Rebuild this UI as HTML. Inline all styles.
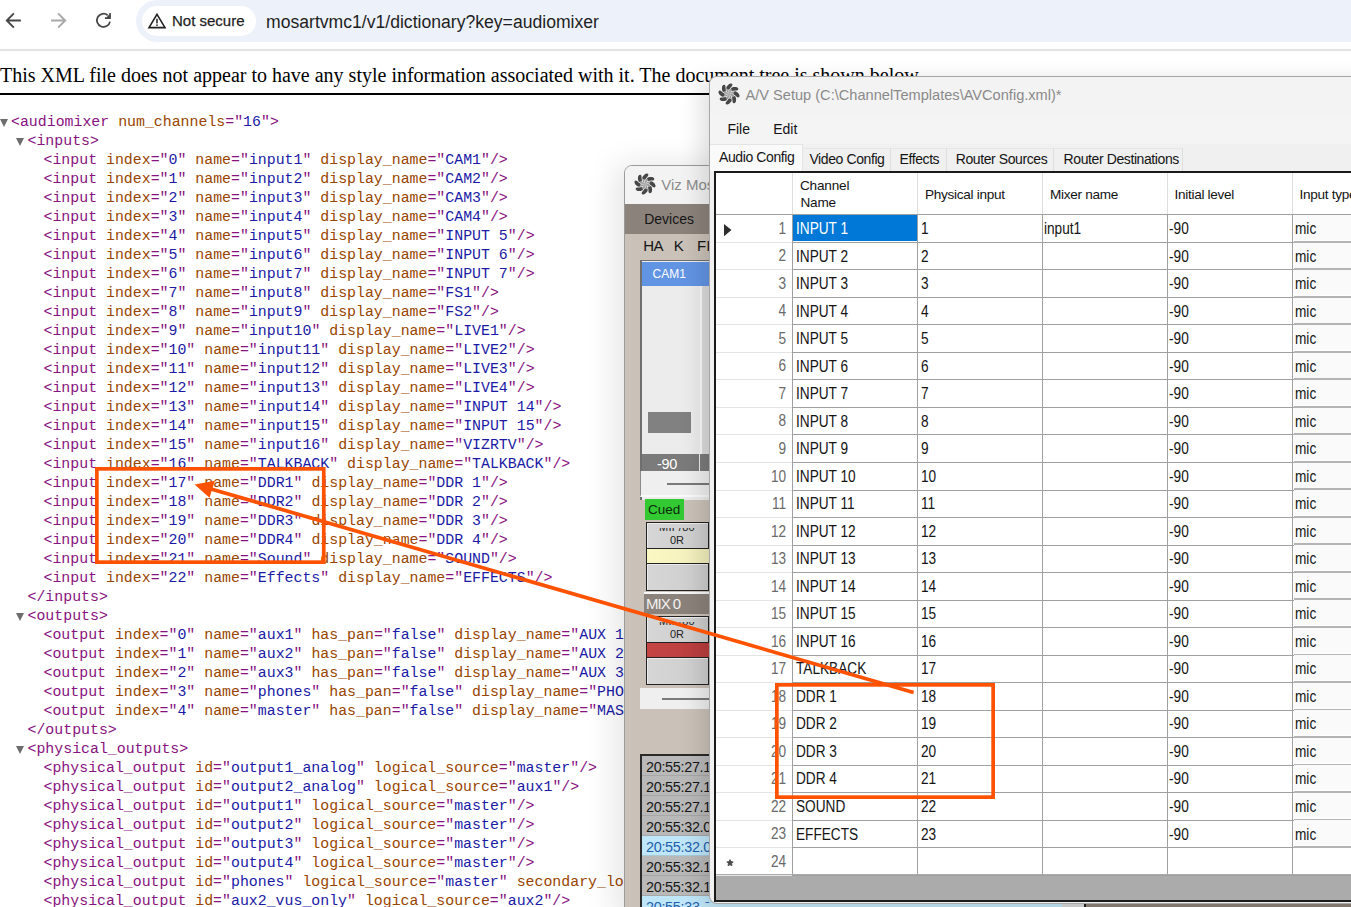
<!DOCTYPE html>
<html><head><meta charset="utf-8">
<style>
*{margin:0;padding:0;box-sizing:border-box}
html,body{width:1351px;height:907px;overflow:hidden;background:#fff;position:relative;font-family:"Liberation Sans",sans-serif}
.abs{position:absolute}
.t{white-space:pre}
/* chrome bar */
#bar{position:absolute;left:0;top:0;width:1351px;height:50.8px;background:#fff;border-bottom:2px solid #e3e3e3}
#omni{position:absolute;left:136px;top:0px;width:1260px;height:42px;background:#edf2fa;border-radius:21px}
#chip{position:absolute;left:142px;top:6px;width:114px;height:30px;background:#fff;border-radius:15px}
#notsec{position:absolute;left:172px;top:12.3px;-webkit-text-stroke:0.25px #1f1f1f;font-size:15px;line-height:18px;color:#1f1f1f;white-space:pre}
#url{position:absolute;left:266px;top:11.3px;font-size:17.6px;line-height:22px;color:#1f1f1f;white-space:pre}
/* xml */
#note{position:absolute;left:0;top:63px;font-family:"Liberation Serif",serif;font-size:20px;line-height:24px;color:#000;white-space:pre}
#rule{position:absolute;left:0;top:93px;width:1351px;height:2px;background:#000}
#xml{position:absolute;left:0;top:0;font-family:"Liberation Mono",monospace;font-size:14.88px;color:#881280}
#xml div{position:absolute;white-space:pre;line-height:19px;height:19px}
.n{color:#994500}.v{color:#1a1aa6}
.tri{position:absolute;width:0;height:0;border-left:4.5px solid transparent;border-right:4.5px solid transparent;border-top:8px solid #6e6e6e}
</style></head><body>
<div id="bar">
  <svg class="abs" style="left:0;top:0" width="130" height="45" viewBox="0 0 130 45">
    <g fill="none" stroke-width="1.9" stroke-linecap="butt" stroke-linejoin="miter">
      <path d="M20.9 20.5H7.6M13.9 13.4L6.8 20.5L13.9 27.6" stroke="#474747"/>
      <path d="M51.1 20.5H64.4M58.1 13.4L65.2 20.5L58.1 27.6" stroke="#a8a8a8"/>
    </g>
    <path d="M110 21.6A6.6 6.6 0 1 1 107.7 15.2" fill="none" stroke="#474747" stroke-width="1.8"/>
    <path d="M109.2 13H110.9V18.9H104.9V17.3H109.2Z M106.6 17.3L109.2 14.6V17.3Z" fill="#474747"/>
  </svg>
  <div id="omni"></div>
  <div id="chip"></div>
  <svg class="abs" style="left:147px;top:12px" width="20" height="17" viewBox="0 0 20 17">
    <path d="M10 2.3L18 15.6H2Z" fill="none" stroke="#1f1f1f" stroke-width="1.6" stroke-linejoin="miter"/>
    <rect x="9.25" y="6.8" width="1.5" height="4.6" fill="#1f1f1f"/><rect x="9.25" y="12.4" width="1.5" height="1.5" fill="#1f1f1f"/>
  </svg>
  <div id="notsec">Not secure</div>
  <div id="url">mosartvmc1/v1/dictionary?key=audiomixer</div>
</div>
<div id="note">This XML file does not appear to have any style information associated with it. The document tree is shown below.</div>
<div id="rule"></div>
<div id="xml">
<div style="left:11.0px;top:112.5px">&lt;audiomixer <span class="n">num_channels</span>="<span class="v">16</span>"&gt;</div>
<i class="tri" style="left:-0.5px;top:119.0px"></i>
<div style="left:27.5px;top:131.5px">&lt;inputs&gt;</div>
<i class="tri" style="left:16.0px;top:138.0px"></i>
<div style="left:43.5px;top:150.5px">&lt;input <span class="n">index</span>="<span class="v">0</span>" <span class="n">name</span>="<span class="v">input1</span>" <span class="n">display_name</span>="<span class="v">CAM1</span>"/&gt;</div>
<div style="left:43.5px;top:169.5px">&lt;input <span class="n">index</span>="<span class="v">1</span>" <span class="n">name</span>="<span class="v">input2</span>" <span class="n">display_name</span>="<span class="v">CAM2</span>"/&gt;</div>
<div style="left:43.5px;top:188.5px">&lt;input <span class="n">index</span>="<span class="v">2</span>" <span class="n">name</span>="<span class="v">input3</span>" <span class="n">display_name</span>="<span class="v">CAM3</span>"/&gt;</div>
<div style="left:43.5px;top:207.5px">&lt;input <span class="n">index</span>="<span class="v">3</span>" <span class="n">name</span>="<span class="v">input4</span>" <span class="n">display_name</span>="<span class="v">CAM4</span>"/&gt;</div>
<div style="left:43.5px;top:226.5px">&lt;input <span class="n">index</span>="<span class="v">4</span>" <span class="n">name</span>="<span class="v">input5</span>" <span class="n">display_name</span>="<span class="v">INPUT 5</span>"/&gt;</div>
<div style="left:43.5px;top:245.5px">&lt;input <span class="n">index</span>="<span class="v">5</span>" <span class="n">name</span>="<span class="v">input6</span>" <span class="n">display_name</span>="<span class="v">INPUT 6</span>"/&gt;</div>
<div style="left:43.5px;top:264.5px">&lt;input <span class="n">index</span>="<span class="v">6</span>" <span class="n">name</span>="<span class="v">input7</span>" <span class="n">display_name</span>="<span class="v">INPUT 7</span>"/&gt;</div>
<div style="left:43.5px;top:283.5px">&lt;input <span class="n">index</span>="<span class="v">7</span>" <span class="n">name</span>="<span class="v">input8</span>" <span class="n">display_name</span>="<span class="v">FS1</span>"/&gt;</div>
<div style="left:43.5px;top:302.5px">&lt;input <span class="n">index</span>="<span class="v">8</span>" <span class="n">name</span>="<span class="v">input9</span>" <span class="n">display_name</span>="<span class="v">FS2</span>"/&gt;</div>
<div style="left:43.5px;top:321.5px">&lt;input <span class="n">index</span>="<span class="v">9</span>" <span class="n">name</span>="<span class="v">input10</span>" <span class="n">display_name</span>="<span class="v">LIVE1</span>"/&gt;</div>
<div style="left:43.5px;top:340.5px">&lt;input <span class="n">index</span>="<span class="v">10</span>" <span class="n">name</span>="<span class="v">input11</span>" <span class="n">display_name</span>="<span class="v">LIVE2</span>"/&gt;</div>
<div style="left:43.5px;top:359.5px">&lt;input <span class="n">index</span>="<span class="v">11</span>" <span class="n">name</span>="<span class="v">input12</span>" <span class="n">display_name</span>="<span class="v">LIVE3</span>"/&gt;</div>
<div style="left:43.5px;top:378.5px">&lt;input <span class="n">index</span>="<span class="v">12</span>" <span class="n">name</span>="<span class="v">input13</span>" <span class="n">display_name</span>="<span class="v">LIVE4</span>"/&gt;</div>
<div style="left:43.5px;top:397.5px">&lt;input <span class="n">index</span>="<span class="v">13</span>" <span class="n">name</span>="<span class="v">input14</span>" <span class="n">display_name</span>="<span class="v">INPUT 14</span>"/&gt;</div>
<div style="left:43.5px;top:416.5px">&lt;input <span class="n">index</span>="<span class="v">14</span>" <span class="n">name</span>="<span class="v">input15</span>" <span class="n">display_name</span>="<span class="v">INPUT 15</span>"/&gt;</div>
<div style="left:43.5px;top:435.5px">&lt;input <span class="n">index</span>="<span class="v">15</span>" <span class="n">name</span>="<span class="v">input16</span>" <span class="n">display_name</span>="<span class="v">VIZRTV</span>"/&gt;</div>
<div style="left:43.5px;top:454.5px">&lt;input <span class="n">index</span>="<span class="v">16</span>" <span class="n">name</span>="<span class="v">TALKBACK</span>" <span class="n">display_name</span>="<span class="v">TALKBACK</span>"/&gt;</div>
<div style="left:43.5px;top:473.5px">&lt;input <span class="n">index</span>="<span class="v">17</span>" <span class="n">name</span>="<span class="v">DDR1</span>" <span class="n">display_name</span>="<span class="v">DDR 1</span>"/&gt;</div>
<div style="left:43.5px;top:492.5px">&lt;input <span class="n">index</span>="<span class="v">18</span>" <span class="n">name</span>="<span class="v">DDR2</span>" <span class="n">display_name</span>="<span class="v">DDR 2</span>"/&gt;</div>
<div style="left:43.5px;top:511.5px">&lt;input <span class="n">index</span>="<span class="v">19</span>" <span class="n">name</span>="<span class="v">DDR3</span>" <span class="n">display_name</span>="<span class="v">DDR 3</span>"/&gt;</div>
<div style="left:43.5px;top:530.5px">&lt;input <span class="n">index</span>="<span class="v">20</span>" <span class="n">name</span>="<span class="v">DDR4</span>" <span class="n">display_name</span>="<span class="v">DDR 4</span>"/&gt;</div>
<div style="left:43.5px;top:549.5px">&lt;input <span class="n">index</span>="<span class="v">21</span>" <span class="n">name</span>="<span class="v">Sound</span>" <span class="n">display_name</span>="<span class="v">SOUND</span>"/&gt;</div>
<div style="left:43.5px;top:568.5px">&lt;input <span class="n">index</span>="<span class="v">22</span>" <span class="n">name</span>="<span class="v">Effects</span>" <span class="n">display_name</span>="<span class="v">EFFECTS</span>"/&gt;</div>
<div style="left:27.5px;top:587.5px">&lt;/inputs&gt;</div>
<div style="left:27.5px;top:606.5px">&lt;outputs&gt;</div>
<i class="tri" style="left:16.0px;top:613.0px"></i>
<div style="left:43.5px;top:625.5px">&lt;output <span class="n">index</span>="<span class="v">0</span>" <span class="n">name</span>="<span class="v">aux1</span>" <span class="n">has_pan</span>="<span class="v">false</span>" <span class="n">display_name</span>="<span class="v">AUX 1</span>"/&gt;</div>
<div style="left:43.5px;top:644.5px">&lt;output <span class="n">index</span>="<span class="v">1</span>" <span class="n">name</span>="<span class="v">aux2</span>" <span class="n">has_pan</span>="<span class="v">false</span>" <span class="n">display_name</span>="<span class="v">AUX 2</span>"/&gt;</div>
<div style="left:43.5px;top:663.5px">&lt;output <span class="n">index</span>="<span class="v">2</span>" <span class="n">name</span>="<span class="v">aux3</span>" <span class="n">has_pan</span>="<span class="v">false</span>" <span class="n">display_name</span>="<span class="v">AUX 3</span>"/&gt;</div>
<div style="left:43.5px;top:682.5px">&lt;output <span class="n">index</span>="<span class="v">3</span>" <span class="n">name</span>="<span class="v">phones</span>" <span class="n">has_pan</span>="<span class="v">false</span>" <span class="n">display_name</span>="<span class="v">PHONES</span>"/&gt;</div>
<div style="left:43.5px;top:701.5px">&lt;output <span class="n">index</span>="<span class="v">4</span>" <span class="n">name</span>="<span class="v">master</span>" <span class="n">has_pan</span>="<span class="v">false</span>" <span class="n">display_name</span>="<span class="v">MASTER</span>"/&gt;</div>
<div style="left:27.5px;top:720.5px">&lt;/outputs&gt;</div>
<div style="left:27.5px;top:739.5px">&lt;physical_outputs&gt;</div>
<i class="tri" style="left:16.0px;top:746.0px"></i>
<div style="left:43.5px;top:758.5px">&lt;physical_output <span class="n">id</span>="<span class="v">output1_analog</span>" <span class="n">logical_source</span>="<span class="v">master</span>"/&gt;</div>
<div style="left:43.5px;top:777.5px">&lt;physical_output <span class="n">id</span>="<span class="v">output2_analog</span>" <span class="n">logical_source</span>="<span class="v">aux1</span>"/&gt;</div>
<div style="left:43.5px;top:796.5px">&lt;physical_output <span class="n">id</span>="<span class="v">output1</span>" <span class="n">logical_source</span>="<span class="v">master</span>"/&gt;</div>
<div style="left:43.5px;top:815.5px">&lt;physical_output <span class="n">id</span>="<span class="v">output2</span>" <span class="n">logical_source</span>="<span class="v">master</span>"/&gt;</div>
<div style="left:43.5px;top:834.5px">&lt;physical_output <span class="n">id</span>="<span class="v">output3</span>" <span class="n">logical_source</span>="<span class="v">master</span>"/&gt;</div>
<div style="left:43.5px;top:853.5px">&lt;physical_output <span class="n">id</span>="<span class="v">output4</span>" <span class="n">logical_source</span>="<span class="v">master</span>"/&gt;</div>
<div style="left:43.5px;top:872.5px">&lt;physical_output <span class="n">id</span>="<span class="v">phones</span>" <span class="n">logical_source</span>="<span class="v">master</span>" <span class="n">secondary_logical_source</span>="<span class="v">aux1</span>"/&gt;</div>
<div style="left:43.5px;top:891.5px">&lt;physical_output <span class="n">id</span>="<span class="v">aux2_vus_only</span>" <span class="n">logical_source</span>="<span class="v">aux2</span>"/&gt;</div>
</div>
<div id="viz" class="abs" style="left:624px;top:165px;width:200px;height:760px;background:#f3f3f3;border:1px solid #9a9a9a;border-radius:8px 8px 0 0;overflow:hidden;box-shadow:-8px 0 32px rgba(0,0,0,0.11)">
<div class="abs" style="left:0px;top:0px;width:200px;height:38px;background:#f3f3f3"></div>
<svg class="abs" style="left:7px;top:5px" width="26" height="26" viewBox="-13 -13 26 26"><circle r="1.6" fill="#b0b0b0"/><path d="M0.1,-1.0 L0.5,-1.3 L0.8,-1.6 L1.0,-1.9 L1.3,-2.1 L1.6,-2.4 L1.9,-2.6 L2.2,-2.8 L2.6,-3.0 L2.9,-3.2 L3.3,-3.3 L3.6,-3.5 L4.0,-3.6 L3.3,-6.2 L2.8,-6.0 L2.2,-5.7 L1.7,-5.3 L1.3,-4.9 L0.9,-4.5 L0.6,-4.1 L0.3,-3.6 L0.1,-3.1 L-0.1,-2.6 L-0.1,-2.0 L-0.1,-1.5 L0.1,-1.0ZM0.8,-0.7 L1.2,-0.6 L1.7,-0.6 L2.1,-0.6 L2.5,-0.6 L2.8,-0.5 L3.2,-0.5 L3.6,-0.4 L3.9,-0.3 L4.3,-0.2 L4.6,-0.0 L5.0,0.1 L5.4,0.3 L6.8,-2.0 L6.2,-2.2 L5.6,-2.4 L5.0,-2.5 L4.4,-2.6 L3.8,-2.5 L3.3,-2.5 L2.7,-2.3 L2.2,-2.1 L1.8,-1.9 L1.3,-1.5 L1.0,-1.2 L0.8,-0.7ZM1.0,0.1 L1.3,0.5 L1.6,0.8 L1.9,1.0 L2.1,1.3 L2.4,1.6 L2.6,1.9 L2.8,2.2 L3.0,2.6 L3.2,2.9 L3.3,3.3 L3.5,3.6 L3.6,4.0 L6.2,3.3 L6.0,2.8 L5.7,2.2 L5.3,1.7 L4.9,1.3 L4.5,0.9 L4.1,0.6 L3.6,0.3 L3.1,0.1 L2.6,-0.1 L2.0,-0.1 L1.5,-0.1 L1.0,0.1ZM0.7,0.8 L0.6,1.2 L0.6,1.7 L0.6,2.1 L0.6,2.5 L0.5,2.8 L0.5,3.2 L0.4,3.6 L0.3,3.9 L0.2,4.3 L0.0,4.6 L-0.1,5.0 L-0.3,5.4 L2.0,6.8 L2.2,6.2 L2.4,5.6 L2.5,5.0 L2.6,4.4 L2.5,3.8 L2.5,3.3 L2.3,2.7 L2.1,2.2 L1.9,1.8 L1.5,1.3 L1.2,1.0 L0.7,0.8ZM-0.1,1.0 L-0.5,1.3 L-0.8,1.6 L-1.0,1.9 L-1.3,2.1 L-1.6,2.4 L-1.9,2.6 L-2.2,2.8 L-2.6,3.0 L-2.9,3.2 L-3.3,3.3 L-3.6,3.5 L-4.0,3.6 L-3.3,6.2 L-2.8,6.0 L-2.2,5.7 L-1.7,5.3 L-1.3,4.9 L-0.9,4.5 L-0.6,4.1 L-0.3,3.6 L-0.1,3.1 L0.1,2.6 L0.1,2.0 L0.1,1.5 L-0.1,1.0ZM-0.8,0.7 L-1.2,0.6 L-1.7,0.6 L-2.1,0.6 L-2.5,0.6 L-2.8,0.5 L-3.2,0.5 L-3.6,0.4 L-3.9,0.3 L-4.3,0.2 L-4.6,0.0 L-5.0,-0.1 L-5.4,-0.3 L-6.8,2.0 L-6.2,2.2 L-5.6,2.4 L-5.0,2.5 L-4.4,2.6 L-3.8,2.5 L-3.3,2.5 L-2.7,2.3 L-2.2,2.1 L-1.8,1.9 L-1.3,1.5 L-1.0,1.2 L-0.8,0.7ZM-1.0,-0.1 L-1.3,-0.5 L-1.6,-0.8 L-1.9,-1.0 L-2.1,-1.3 L-2.4,-1.6 L-2.6,-1.9 L-2.8,-2.2 L-3.0,-2.6 L-3.2,-2.9 L-3.3,-3.3 L-3.5,-3.6 L-3.6,-4.0 L-6.2,-3.3 L-6.0,-2.8 L-5.7,-2.2 L-5.3,-1.7 L-4.9,-1.3 L-4.5,-0.9 L-4.1,-0.6 L-3.6,-0.3 L-3.1,-0.1 L-2.6,0.1 L-2.0,0.1 L-1.5,0.1 L-1.0,-0.1ZM-0.7,-0.8 L-0.6,-1.2 L-0.6,-1.7 L-0.6,-2.1 L-0.6,-2.5 L-0.5,-2.8 L-0.5,-3.2 L-0.4,-3.6 L-0.3,-3.9 L-0.2,-4.3 L-0.0,-4.6 L0.1,-5.0 L0.3,-5.4 L-2.0,-6.8 L-2.2,-6.2 L-2.4,-5.6 L-2.5,-5.0 L-2.6,-4.4 L-2.5,-3.8 L-2.5,-3.3 L-2.3,-2.7 L-2.1,-2.2 L-1.9,-1.8 L-1.5,-1.3 L-1.2,-1.0 L-0.7,-0.8Z" fill="#9c9c9c"/><path d="M3.4,-2.9 L3.7,-3.0 L4.1,-3.1 L4.4,-3.2 L4.8,-3.3 L5.2,-3.3 L5.6,-3.4 L6.1,-3.4 L6.5,-3.5 L7.0,-3.5 L7.6,-3.5 L8.2,-3.6 L9.3,-4.5 L9.3,-4.5 L9.1,-5.9 L8.5,-6.3 L7.9,-6.7 L7.2,-6.9 L6.5,-7.0 L5.8,-7.1 L5.1,-7.1 L4.4,-7.0 L3.8,-6.8 L3.1,-6.6 L2.5,-6.3 L2.0,-6.0ZM4.4,0.3 L4.8,0.5 L5.1,0.7 L5.4,0.9 L5.7,1.1 L6.0,1.3 L6.4,1.6 L6.7,1.9 L7.1,2.2 L7.4,2.5 L7.9,2.9 L8.4,3.2 L9.7,3.4 L9.7,3.4 L10.6,2.3 L10.5,1.6 L10.3,0.9 L10.0,0.2 L9.6,-0.4 L9.1,-0.9 L8.6,-1.4 L8.0,-1.8 L7.5,-2.2 L6.9,-2.5 L6.3,-2.7 L5.6,-2.8ZM2.9,3.4 L3.0,3.7 L3.1,4.1 L3.2,4.4 L3.3,4.8 L3.3,5.2 L3.4,5.6 L3.4,6.1 L3.5,6.5 L3.5,7.0 L3.5,7.6 L3.6,8.2 L4.5,9.3 L4.5,9.3 L5.9,9.1 L6.3,8.5 L6.7,7.9 L6.9,7.2 L7.0,6.5 L7.1,5.8 L7.1,5.1 L7.0,4.4 L6.8,3.8 L6.6,3.1 L6.3,2.5 L6.0,2.0ZM-0.3,4.4 L-0.5,4.8 L-0.7,5.1 L-0.9,5.4 L-1.1,5.7 L-1.3,6.0 L-1.6,6.4 L-1.9,6.7 L-2.2,7.1 L-2.5,7.4 L-2.9,7.9 L-3.2,8.4 L-3.4,9.7 L-3.4,9.7 L-2.3,10.6 L-1.6,10.5 L-0.9,10.3 L-0.2,10.0 L0.4,9.6 L0.9,9.1 L1.4,8.6 L1.8,8.0 L2.2,7.5 L2.5,6.9 L2.7,6.3 L2.8,5.6ZM-3.4,2.9 L-3.7,3.0 L-4.1,3.1 L-4.4,3.2 L-4.8,3.3 L-5.2,3.3 L-5.6,3.4 L-6.1,3.4 L-6.5,3.5 L-7.0,3.5 L-7.6,3.5 L-8.2,3.6 L-9.3,4.5 L-9.3,4.5 L-9.1,5.9 L-8.5,6.3 L-7.9,6.7 L-7.2,6.9 L-6.5,7.0 L-5.8,7.1 L-5.1,7.1 L-4.4,7.0 L-3.8,6.8 L-3.1,6.6 L-2.5,6.3 L-2.0,6.0ZM-4.4,-0.3 L-4.8,-0.5 L-5.1,-0.7 L-5.4,-0.9 L-5.7,-1.1 L-6.0,-1.3 L-6.4,-1.6 L-6.7,-1.9 L-7.1,-2.2 L-7.4,-2.5 L-7.9,-2.9 L-8.4,-3.2 L-9.7,-3.4 L-9.7,-3.4 L-10.6,-2.3 L-10.5,-1.6 L-10.3,-0.9 L-10.0,-0.2 L-9.6,0.4 L-9.1,0.9 L-8.6,1.4 L-8.0,1.8 L-7.5,2.2 L-6.9,2.5 L-6.3,2.7 L-5.6,2.8ZM-2.9,-3.4 L-3.0,-3.7 L-3.1,-4.1 L-3.2,-4.4 L-3.3,-4.8 L-3.3,-5.2 L-3.4,-5.6 L-3.4,-6.1 L-3.5,-6.5 L-3.5,-7.0 L-3.5,-7.6 L-3.6,-8.2 L-4.5,-9.3 L-4.5,-9.3 L-5.9,-9.1 L-6.3,-8.5 L-6.7,-7.9 L-6.9,-7.2 L-7.0,-6.5 L-7.1,-5.8 L-7.1,-5.1 L-7.0,-4.4 L-6.8,-3.8 L-6.6,-3.1 L-6.3,-2.5 L-6.0,-2.0ZM0.3,-4.4 L0.5,-4.8 L0.7,-5.1 L0.9,-5.4 L1.1,-5.7 L1.3,-6.0 L1.6,-6.4 L1.9,-6.7 L2.2,-7.1 L2.5,-7.4 L2.9,-7.9 L3.2,-8.4 L3.4,-9.7 L3.4,-9.7 L2.3,-10.6 L1.6,-10.5 L0.9,-10.3 L0.2,-10.0 L-0.4,-9.6 L-0.9,-9.1 L-1.4,-8.6 L-1.8,-8.0 L-2.2,-7.5 L-2.5,-6.9 L-2.7,-6.3 L-2.8,-5.6Z" fill="#474747"/></svg>
<div class="abs t" style="left:36.299999999999955px;top:10.12px;font-size:15px;line-height:17.25px;color:#8c8c8c;">Viz Mosart</div>
<div class="abs" style="left:0px;top:37.5px;width:200px;height:30.3px;background:#8b827b"></div>
<div class="abs t" style="left:19.200000000000045px;top:45.23px;font-size:14px;line-height:16.10px;color:#161616;">Devices</div>
<div class="abs" style="left:0px;top:67.80000000000001px;width:200px;height:700px;background:#cac2b8"></div>
<div class="abs t" style="left:18.200000000000045px;top:70.53px;font-size:15px;line-height:17.25px;color:#151515;letter-spacing:-0.6px">HA</div>
<div class="abs t" style="left:48.700000000000045px;top:70.53px;font-size:15px;line-height:17.25px;color:#151515;">K</div>
<div class="abs t" style="left:72px;top:70.53px;font-size:15px;line-height:17.25px;color:#151515;">FI</div>
<div class="abs" style="left:15.399999999999977px;top:94px;width:80px;height:240px;background:#ececec;border-left:2px solid #6f6f6f;border-top:1.6px solid #6f6f6f"></div>
<div class="abs" style="left:17.399999999999977px;top:95.60000000000002px;width:80px;height:24.8px;background:#6294e4"></div>
<div class="abs t" style="left:27.5px;top:102.34px;font-size:12px;line-height:13.80px;color:#ffffff;">CAM1</div>
<div class="abs" style="left:75px;top:120.39999999999998px;width:1.5px;height:168px;background:#fafafa"></div>
<div class="abs" style="left:76.5px;top:120.39999999999998px;width:20px;height:168px;background:#dcdcdc"></div>
<div class="abs" style="left:22.600000000000023px;top:245.5px;width:43.5px;height:21px;background:#818181"></div>
<div class="abs" style="left:17.399999999999977px;top:288px;width:56.4px;height:17px;background:#7b7b7b"></div>
<div class="abs" style="left:75px;top:288px;width:20px;height:17px;background:#7b7b7b"></div>
<div class="abs t" style="left:32px;top:289.68px;font-size:14.5px;line-height:16.67px;color:#ffffff;letter-spacing:-0.3px">-90</div>
<div class="abs" style="left:15.399999999999977px;top:305px;width:80px;height:25.5px;background:#efefef;border-left:1.6px solid #8a8a8a;border-bottom:2px solid #fafafa"></div>
<div class="abs" style="left:42.39999999999998px;top:317.3px;width:60px;height:2.2px;background:#7a7a7a"></div>
<div class="abs" style="left:20.100000000000023px;top:333.2px;width:38.6px;height:21px;background:#33c933"></div>
<div class="abs t" style="left:23px;top:336.48px;font-size:13.5px;line-height:15.52px;color:#0c2a0c;">Cued</div>
<div class="abs" style="left:21px;top:355.79999999999995px;width:62.7px;height:27.600000000000023px;background:linear-gradient(90deg,#d6d6d6,#cdcdcd);border:1.7px solid #222;box-shadow:inset 1px 1px 0 #ececec"></div>
<div class="abs" style="left:21px;top:361.60px;width:62px;height:20.10px;overflow:hidden">
<div class="abs t" style="left:0;top:-5.20px;width:62px;text-align:center;font-size:11px;line-height:11px;color:#222;letter-spacing:0.3px">MIF/80</div>
<div class="abs t" style="left:0;top:7.40px;width:62px;text-align:center;font-size:11px;line-height:11px;color:#222">0R</div>
</div>
<div class="abs" style="left:21px;top:383.4px;width:62.7px;height:13.6px;background:linear-gradient(90deg,#fbf8c4,#f1eebb);border-left:1.7px solid #222"></div>
<div class="abs" style="left:21px;top:397px;width:62.7px;height:28px;background:linear-gradient(90deg,#d6d6d6,#cdcdcd);border:1.7px solid #222;box-shadow:inset 1px 1px 0 #ececec"></div>
<div class="abs" style="left:19px;top:426.29999999999995px;width:80px;height:1.8px;background:#f8f8f8"></div>
<div class="abs" style="left:19px;top:428px;width:80px;height:20px;background:#8b827b"></div>
<div class="abs t" style="left:21px;top:429.42px;font-size:15px;line-height:17.25px;color:#f2f2f2;letter-spacing:-1px">MIX 0</div>
<div class="abs" style="left:21px;top:449.70000000000005px;width:62.7px;height:27.0px;background:linear-gradient(90deg,#d6d6d6,#cdcdcd);border:1.7px solid #222;box-shadow:inset 1px 1px 0 #ececec"></div>
<div class="abs" style="left:21px;top:455.50px;width:62px;height:19.50px;overflow:hidden">
<div class="abs t" style="left:0;top:-5.20px;width:62px;text-align:center;font-size:11px;line-height:11px;color:#222;letter-spacing:0.3px">MIF/80</div>
<div class="abs t" style="left:0;top:7.40px;width:62px;text-align:center;font-size:11px;line-height:11px;color:#222">0R</div>
</div>
<div class="abs" style="left:21px;top:476.70000000000005px;width:62.7px;height:14.6px;background:linear-gradient(90deg,#c54545,#b93d3d);border-left:1.7px solid #222"></div>
<div class="abs" style="left:21px;top:491px;width:62.7px;height:28px;background:linear-gradient(90deg,#d6d6d6,#cdcdcd);border:1.7px solid #222;box-shadow:inset 1px 1px 0 #ececec"></div>
<div class="abs" style="left:14.799999999999955px;top:521.7px;width:80px;height:21.2px;background:#efefef"></div>
<div class="abs" style="left:36.700000000000045px;top:532px;width:60px;height:2.2px;background:#7a7a7a"></div>
<div class="abs" style="left:15px;top:588.3px;width:80px;height:160px;background:#b8b8b8;border-left:2px solid #2a2a2a;border-top:2px solid #2a2a2a"></div>
<div class="abs" style="left:17px;top:590.3px;width:80px;height:18.65000000000009px;background:#b9b9b9"></div>
<div class="abs" style="left:17px;top:608.95px;width:80px;height:1px;background:#a7a7a7"></div>
<div class="abs t" style="left:21px;top:593.47px;font-size:14.4px;line-height:16.56px;color:#161616;letter-spacing:-0.3px">20:55:27.1</div>
<div class="abs" style="left:17px;top:609.95px;width:80px;height:18.949999999999932px;background:#b9b9b9"></div>
<div class="abs" style="left:17px;top:628.9px;width:80px;height:1px;background:#a7a7a7"></div>
<div class="abs t" style="left:21px;top:613.12px;font-size:14.4px;line-height:16.56px;color:#161616;letter-spacing:-0.3px">20:55:27.1</div>
<div class="abs" style="left:17px;top:629.9px;width:80px;height:18.950000000000045px;background:#b9b9b9"></div>
<div class="abs" style="left:17px;top:648.85px;width:80px;height:1px;background:#a7a7a7"></div>
<div class="abs t" style="left:21px;top:633.07px;font-size:14.4px;line-height:16.56px;color:#161616;letter-spacing:-0.3px">20:55:27.1</div>
<div class="abs" style="left:17px;top:649.85px;width:80px;height:18.949999999999932px;background:#b9b9b9"></div>
<div class="abs" style="left:17px;top:668.8px;width:80px;height:1px;background:#a7a7a7"></div>
<div class="abs t" style="left:21px;top:653.02px;font-size:14.4px;line-height:16.56px;color:#161616;letter-spacing:-0.3px">20:55:32.0</div>
<div class="abs" style="left:17px;top:669.8px;width:80px;height:18.950000000000045px;background:#bfe7f9"></div>
<div class="abs" style="left:17px;top:688.75px;width:80px;height:1px;background:#a9c9d9"></div>
<div class="abs t" style="left:21px;top:672.97px;font-size:14.4px;line-height:16.56px;color:#1f5fae;letter-spacing:-0.3px">20:55:32.0</div>
<div class="abs" style="left:17px;top:689.75px;width:80px;height:18.950000000000045px;background:#b9b9b9"></div>
<div class="abs" style="left:17px;top:708.7px;width:80px;height:1px;background:#a7a7a7"></div>
<div class="abs t" style="left:21px;top:692.92px;font-size:14.4px;line-height:16.56px;color:#161616;letter-spacing:-0.3px">20:55:32.1</div>
<div class="abs" style="left:17px;top:709.7px;width:80px;height:18.949999999999932px;background:#b9b9b9"></div>
<div class="abs" style="left:17px;top:728.65px;width:80px;height:1px;background:#a7a7a7"></div>
<div class="abs t" style="left:21px;top:712.87px;font-size:14.4px;line-height:16.56px;color:#161616;letter-spacing:-0.3px">20:55:32.1</div>
<div class="abs" style="left:17px;top:729.65px;width:80px;height:18.950000000000045px;background:#bfe7f9"></div>
<div class="abs" style="left:17px;top:748.6px;width:80px;height:1px;background:#a9c9d9"></div>
<div class="abs t" style="left:21px;top:732.82px;font-size:14.4px;line-height:16.56px;color:#1f5fae;letter-spacing:-0.3px">20:55:33.2</div>
</div>
<div class="abs" style="left:700px;top:903px;width:362px;height:4px;background:#c2e6f6"></div>
<div class="abs" style="left:1062px;top:903px;width:22px;height:4px;background:#d8d8d8"></div>
<div class="abs" style="left:1084px;top:903px;width:2px;height:4px;background:#222"></div>
<div class="abs" style="left:1086px;top:903px;width:270px;height:4px;background:#8b8178"></div>
<div id="av" class="abs" style="left:708.8px;top:75.5px;width:700px;height:828px;background:#f0f0f0;border:1px solid rgba(0,0,0,0.3);border-radius:8px 0 0 8px;overflow:hidden;box-shadow:-8px 4px 22px rgba(0,0,0,0.13)">
<div class="abs" style="left:-0.80px;top:0.00px;width:700.00px;height:38.00px;background:#f3f3f3"></div>
<svg class="abs" style="left:6.2000000000000455px;top:4.5px" width="26" height="26" viewBox="-13 -13 26 26"><circle r="1.6" fill="#b0b0b0"/><path d="M0.1,-1.0 L0.5,-1.3 L0.8,-1.6 L1.0,-1.9 L1.3,-2.1 L1.6,-2.4 L1.9,-2.6 L2.2,-2.8 L2.6,-3.0 L2.9,-3.2 L3.3,-3.3 L3.6,-3.5 L4.0,-3.6 L3.3,-6.2 L2.8,-6.0 L2.2,-5.7 L1.7,-5.3 L1.3,-4.9 L0.9,-4.5 L0.6,-4.1 L0.3,-3.6 L0.1,-3.1 L-0.1,-2.6 L-0.1,-2.0 L-0.1,-1.5 L0.1,-1.0ZM0.8,-0.7 L1.2,-0.6 L1.7,-0.6 L2.1,-0.6 L2.5,-0.6 L2.8,-0.5 L3.2,-0.5 L3.6,-0.4 L3.9,-0.3 L4.3,-0.2 L4.6,-0.0 L5.0,0.1 L5.4,0.3 L6.8,-2.0 L6.2,-2.2 L5.6,-2.4 L5.0,-2.5 L4.4,-2.6 L3.8,-2.5 L3.3,-2.5 L2.7,-2.3 L2.2,-2.1 L1.8,-1.9 L1.3,-1.5 L1.0,-1.2 L0.8,-0.7ZM1.0,0.1 L1.3,0.5 L1.6,0.8 L1.9,1.0 L2.1,1.3 L2.4,1.6 L2.6,1.9 L2.8,2.2 L3.0,2.6 L3.2,2.9 L3.3,3.3 L3.5,3.6 L3.6,4.0 L6.2,3.3 L6.0,2.8 L5.7,2.2 L5.3,1.7 L4.9,1.3 L4.5,0.9 L4.1,0.6 L3.6,0.3 L3.1,0.1 L2.6,-0.1 L2.0,-0.1 L1.5,-0.1 L1.0,0.1ZM0.7,0.8 L0.6,1.2 L0.6,1.7 L0.6,2.1 L0.6,2.5 L0.5,2.8 L0.5,3.2 L0.4,3.6 L0.3,3.9 L0.2,4.3 L0.0,4.6 L-0.1,5.0 L-0.3,5.4 L2.0,6.8 L2.2,6.2 L2.4,5.6 L2.5,5.0 L2.6,4.4 L2.5,3.8 L2.5,3.3 L2.3,2.7 L2.1,2.2 L1.9,1.8 L1.5,1.3 L1.2,1.0 L0.7,0.8ZM-0.1,1.0 L-0.5,1.3 L-0.8,1.6 L-1.0,1.9 L-1.3,2.1 L-1.6,2.4 L-1.9,2.6 L-2.2,2.8 L-2.6,3.0 L-2.9,3.2 L-3.3,3.3 L-3.6,3.5 L-4.0,3.6 L-3.3,6.2 L-2.8,6.0 L-2.2,5.7 L-1.7,5.3 L-1.3,4.9 L-0.9,4.5 L-0.6,4.1 L-0.3,3.6 L-0.1,3.1 L0.1,2.6 L0.1,2.0 L0.1,1.5 L-0.1,1.0ZM-0.8,0.7 L-1.2,0.6 L-1.7,0.6 L-2.1,0.6 L-2.5,0.6 L-2.8,0.5 L-3.2,0.5 L-3.6,0.4 L-3.9,0.3 L-4.3,0.2 L-4.6,0.0 L-5.0,-0.1 L-5.4,-0.3 L-6.8,2.0 L-6.2,2.2 L-5.6,2.4 L-5.0,2.5 L-4.4,2.6 L-3.8,2.5 L-3.3,2.5 L-2.7,2.3 L-2.2,2.1 L-1.8,1.9 L-1.3,1.5 L-1.0,1.2 L-0.8,0.7ZM-1.0,-0.1 L-1.3,-0.5 L-1.6,-0.8 L-1.9,-1.0 L-2.1,-1.3 L-2.4,-1.6 L-2.6,-1.9 L-2.8,-2.2 L-3.0,-2.6 L-3.2,-2.9 L-3.3,-3.3 L-3.5,-3.6 L-3.6,-4.0 L-6.2,-3.3 L-6.0,-2.8 L-5.7,-2.2 L-5.3,-1.7 L-4.9,-1.3 L-4.5,-0.9 L-4.1,-0.6 L-3.6,-0.3 L-3.1,-0.1 L-2.6,0.1 L-2.0,0.1 L-1.5,0.1 L-1.0,-0.1ZM-0.7,-0.8 L-0.6,-1.2 L-0.6,-1.7 L-0.6,-2.1 L-0.6,-2.5 L-0.5,-2.8 L-0.5,-3.2 L-0.4,-3.6 L-0.3,-3.9 L-0.2,-4.3 L-0.0,-4.6 L0.1,-5.0 L0.3,-5.4 L-2.0,-6.8 L-2.2,-6.2 L-2.4,-5.6 L-2.5,-5.0 L-2.6,-4.4 L-2.5,-3.8 L-2.5,-3.3 L-2.3,-2.7 L-2.1,-2.2 L-1.9,-1.8 L-1.5,-1.3 L-1.2,-1.0 L-0.7,-0.8Z" fill="#9c9c9c"/><path d="M3.4,-2.9 L3.7,-3.0 L4.1,-3.1 L4.4,-3.2 L4.8,-3.3 L5.2,-3.3 L5.6,-3.4 L6.1,-3.4 L6.5,-3.5 L7.0,-3.5 L7.6,-3.5 L8.2,-3.6 L9.3,-4.5 L9.3,-4.5 L9.1,-5.9 L8.5,-6.3 L7.9,-6.7 L7.2,-6.9 L6.5,-7.0 L5.8,-7.1 L5.1,-7.1 L4.4,-7.0 L3.8,-6.8 L3.1,-6.6 L2.5,-6.3 L2.0,-6.0ZM4.4,0.3 L4.8,0.5 L5.1,0.7 L5.4,0.9 L5.7,1.1 L6.0,1.3 L6.4,1.6 L6.7,1.9 L7.1,2.2 L7.4,2.5 L7.9,2.9 L8.4,3.2 L9.7,3.4 L9.7,3.4 L10.6,2.3 L10.5,1.6 L10.3,0.9 L10.0,0.2 L9.6,-0.4 L9.1,-0.9 L8.6,-1.4 L8.0,-1.8 L7.5,-2.2 L6.9,-2.5 L6.3,-2.7 L5.6,-2.8ZM2.9,3.4 L3.0,3.7 L3.1,4.1 L3.2,4.4 L3.3,4.8 L3.3,5.2 L3.4,5.6 L3.4,6.1 L3.5,6.5 L3.5,7.0 L3.5,7.6 L3.6,8.2 L4.5,9.3 L4.5,9.3 L5.9,9.1 L6.3,8.5 L6.7,7.9 L6.9,7.2 L7.0,6.5 L7.1,5.8 L7.1,5.1 L7.0,4.4 L6.8,3.8 L6.6,3.1 L6.3,2.5 L6.0,2.0ZM-0.3,4.4 L-0.5,4.8 L-0.7,5.1 L-0.9,5.4 L-1.1,5.7 L-1.3,6.0 L-1.6,6.4 L-1.9,6.7 L-2.2,7.1 L-2.5,7.4 L-2.9,7.9 L-3.2,8.4 L-3.4,9.7 L-3.4,9.7 L-2.3,10.6 L-1.6,10.5 L-0.9,10.3 L-0.2,10.0 L0.4,9.6 L0.9,9.1 L1.4,8.6 L1.8,8.0 L2.2,7.5 L2.5,6.9 L2.7,6.3 L2.8,5.6ZM-3.4,2.9 L-3.7,3.0 L-4.1,3.1 L-4.4,3.2 L-4.8,3.3 L-5.2,3.3 L-5.6,3.4 L-6.1,3.4 L-6.5,3.5 L-7.0,3.5 L-7.6,3.5 L-8.2,3.6 L-9.3,4.5 L-9.3,4.5 L-9.1,5.9 L-8.5,6.3 L-7.9,6.7 L-7.2,6.9 L-6.5,7.0 L-5.8,7.1 L-5.1,7.1 L-4.4,7.0 L-3.8,6.8 L-3.1,6.6 L-2.5,6.3 L-2.0,6.0ZM-4.4,-0.3 L-4.8,-0.5 L-5.1,-0.7 L-5.4,-0.9 L-5.7,-1.1 L-6.0,-1.3 L-6.4,-1.6 L-6.7,-1.9 L-7.1,-2.2 L-7.4,-2.5 L-7.9,-2.9 L-8.4,-3.2 L-9.7,-3.4 L-9.7,-3.4 L-10.6,-2.3 L-10.5,-1.6 L-10.3,-0.9 L-10.0,-0.2 L-9.6,0.4 L-9.1,0.9 L-8.6,1.4 L-8.0,1.8 L-7.5,2.2 L-6.9,2.5 L-6.3,2.7 L-5.6,2.8ZM-2.9,-3.4 L-3.0,-3.7 L-3.1,-4.1 L-3.2,-4.4 L-3.3,-4.8 L-3.3,-5.2 L-3.4,-5.6 L-3.4,-6.1 L-3.5,-6.5 L-3.5,-7.0 L-3.5,-7.6 L-3.6,-8.2 L-4.5,-9.3 L-4.5,-9.3 L-5.9,-9.1 L-6.3,-8.5 L-6.7,-7.9 L-6.9,-7.2 L-7.0,-6.5 L-7.1,-5.8 L-7.1,-5.1 L-7.0,-4.4 L-6.8,-3.8 L-6.6,-3.1 L-6.3,-2.5 L-6.0,-2.0ZM0.3,-4.4 L0.5,-4.8 L0.7,-5.1 L0.9,-5.4 L1.1,-5.7 L1.3,-6.0 L1.6,-6.4 L1.9,-6.7 L2.2,-7.1 L2.5,-7.4 L2.9,-7.9 L3.2,-8.4 L3.4,-9.7 L3.4,-9.7 L2.3,-10.6 L1.6,-10.5 L0.9,-10.3 L0.2,-10.0 L-0.4,-9.6 L-0.9,-9.1 L-1.4,-8.6 L-1.8,-8.0 L-2.2,-7.5 L-2.5,-6.9 L-2.7,-6.3 L-2.8,-5.6Z" fill="#474747"/></svg>
<div class="abs t" style="left:35.70px;top:10.29px;font-size:14.6px;line-height:16.79px;color:#8a8a8a;">A/V Setup (C:\ChannelTemplates\AVConfig.xml)*</div>
<div class="abs" style="left:-0.80px;top:37.80px;width:700.00px;height:29.70px;background:#f4f4f4"></div>
<div class="abs t" style="left:17.60px;top:44.33px;font-size:14px;line-height:16.10px;color:#141414;">File</div>
<div class="abs t" style="left:63.40px;top:44.33px;font-size:14px;line-height:16.10px;color:#141414;">Edit</div>
<div class="abs" style="left:-0.80px;top:67.50px;width:700.00px;height:27.00px;background:#f0f0f0"></div>
<div class="abs" style="left:-0.80px;top:67.70px;width:93.70px;height:26.80px;background:#fafafa;border:1px solid #e4e4e4;border-bottom:none"></div>
<div class="abs t" style="left:9.20px;top:72.33px;font-size:14px;line-height:16.10px;color:#141414;letter-spacing:-0.4px">Audio Config</div>
<div class="abs" style="left:92.90px;top:71.20px;width:88.30px;height:23.30px;background:#f0f0f0;border-right:1px solid #dedede;border-top:1px solid #e6e6e6"></div>
<div class="abs t" style="left:99.60px;top:74.83px;font-size:14px;line-height:16.10px;color:#141414;letter-spacing:-0.4px">Video Config</div>
<div class="abs" style="left:181.20px;top:71.20px;width:56.00px;height:23.30px;background:#f0f0f0;border-right:1px solid #dedede;border-top:1px solid #e6e6e6"></div>
<div class="abs t" style="left:189.70px;top:74.83px;font-size:14px;line-height:16.10px;color:#141414;letter-spacing:-0.4px">Effects</div>
<div class="abs" style="left:237.20px;top:71.20px;width:107.40px;height:23.30px;background:#f0f0f0;border-right:1px solid #dedede;border-top:1px solid #e6e6e6"></div>
<div class="abs t" style="left:245.90px;top:74.83px;font-size:14px;line-height:16.10px;color:#141414;letter-spacing:-0.4px">Router Sources</div>
<div class="abs" style="left:344.60px;top:71.20px;width:129.00px;height:23.30px;background:#f0f0f0;border-right:1px solid #dedede;border-top:1px solid #e6e6e6"></div>
<div class="abs t" style="left:353.80px;top:74.83px;font-size:14px;line-height:16.10px;color:#141414;letter-spacing:-0.4px">Router Destinations</div>
<div class="abs" style="left:4.40px;top:94.50px;width:700.00px;height:730.50px;background:#ababab;border-left:2px solid #1a1a1a;border-top:2px solid #1a1a1a;border-bottom:2px solid #1a1a1a"></div>
<div class="abs" style="left:6.20px;top:96.50px;width:700.00px;height:41.00px;background:#ffffff"></div>
<div class="abs" style="left:6.20px;top:137.50px;width:700.00px;height:660.48px;background:#ffffff"></div>
<div class="abs" style="left:81.80px;top:96.50px;width:1.00px;height:41.00px;background:#dedede"></div>
<div class="abs" style="left:207.60px;top:96.50px;width:1.00px;height:41.00px;background:#dedede"></div>
<div class="abs" style="left:332.20px;top:96.50px;width:1.00px;height:41.00px;background:#dedede"></div>
<div class="abs" style="left:457.60px;top:96.50px;width:1.00px;height:41.00px;background:#dedede"></div>
<div class="abs" style="left:582.50px;top:96.50px;width:1.00px;height:41.00px;background:#dedede"></div>
<div class="abs t" style="left:90.20px;top:101.79px;font-size:13.6px;line-height:15.64px;color:#141414;letter-spacing:-0.2px">Channel</div>
<div class="abs t" style="left:90.70px;top:118.59px;font-size:13.6px;line-height:15.64px;color:#141414;letter-spacing:-0.2px">Name</div>
<div class="abs t" style="left:215.20px;top:110.99px;font-size:13.6px;line-height:15.64px;color:#141414;letter-spacing:-0.3px">Physical input</div>
<div class="abs t" style="left:340.20px;top:110.99px;font-size:13.6px;line-height:15.64px;color:#141414;letter-spacing:-0.3px">Mixer name</div>
<div class="abs t" style="left:464.70px;top:110.99px;font-size:13.6px;line-height:15.64px;color:#141414;letter-spacing:-0.3px">Initial level</div>
<div class="abs t" style="left:589.70px;top:110.99px;font-size:13.6px;line-height:15.64px;color:#141414;letter-spacing:-0.3px">Input type</div>
<div class="abs" style="left:6.20px;top:137.50px;width:700.00px;height:1.00px;background:#a0a0a0"></div>
<div class="abs" style="left:6.20px;top:165.32px;width:75.60px;height:1.00px;background:#e4e4e4"></div>
<div class="abs" style="left:81.80px;top:165.32px;width:700.00px;height:1.00px;background:#a0a0a0"></div>
<div class="abs" style="left:584.50px;top:138.50px;width:100.00px;height:25.02px;background:#fafafa"></div>
<div class="abs" style="left:584.50px;top:164.22px;width:100.00px;height:2.20px;background:#b4b4b4"></div>
<div class="abs t" style="left:30.200000000000045px;top:143.33px;width:46.200000000000045px;text-align:right;font-size:15.6px;line-height:17.94px;color:#6a6a6a;transform:scaleX(0.875);transform-origin:100% 0">1</div>
<div class="abs" style="left:82.80px;top:138.50px;width:124.80px;height:26.02px;background:#0078d7"></div>
<div class="abs t" style="left:85.90px;top:143.58px;font-size:15.6px;line-height:17.94px;color:#ffffff;transform:scaleX(0.875);transform-origin:0 0">INPUT 1</div>
<div class="abs t" style="left:211.40px;top:143.58px;font-size:15.6px;line-height:17.94px;color:#141414;transform:scaleX(0.875);transform-origin:0 0">1</div>
<div class="abs t" style="left:459.60px;top:143.58px;font-size:15.6px;line-height:17.94px;color:#141414;transform:scaleX(0.875);transform-origin:0 0">-90</div>
<div class="abs t" style="left:585.10px;top:143.58px;font-size:15.6px;line-height:17.94px;color:#141414;transform:scaleX(0.875);transform-origin:0 0">mic</div>
<div class="abs t" style="left:334.20px;top:143.58px;font-size:15.6px;line-height:17.94px;color:#141414;transform:scaleX(0.875);transform-origin:0 0">input1</div>
<div class="abs" style="left:6.20px;top:192.84px;width:75.60px;height:1.00px;background:#e4e4e4"></div>
<div class="abs" style="left:81.80px;top:192.84px;width:700.00px;height:1.00px;background:#a0a0a0"></div>
<div class="abs" style="left:584.50px;top:166.02px;width:100.00px;height:25.02px;background:#fafafa"></div>
<div class="abs" style="left:584.50px;top:191.74px;width:100.00px;height:2.20px;background:#b4b4b4"></div>
<div class="abs t" style="left:30.200000000000045px;top:170.85px;width:46.200000000000045px;text-align:right;font-size:15.6px;line-height:17.94px;color:#6a6a6a;transform:scaleX(0.875);transform-origin:100% 0">2</div>
<div class="abs t" style="left:85.90px;top:171.10px;font-size:15.6px;line-height:17.94px;color:#141414;transform:scaleX(0.875);transform-origin:0 0">INPUT 2</div>
<div class="abs t" style="left:211.40px;top:171.10px;font-size:15.6px;line-height:17.94px;color:#141414;transform:scaleX(0.875);transform-origin:0 0">2</div>
<div class="abs t" style="left:459.60px;top:171.10px;font-size:15.6px;line-height:17.94px;color:#141414;transform:scaleX(0.875);transform-origin:0 0">-90</div>
<div class="abs t" style="left:585.10px;top:171.10px;font-size:15.6px;line-height:17.94px;color:#141414;transform:scaleX(0.875);transform-origin:0 0">mic</div>
<div class="abs" style="left:6.20px;top:220.36px;width:75.60px;height:1.00px;background:#e4e4e4"></div>
<div class="abs" style="left:81.80px;top:220.36px;width:700.00px;height:1.00px;background:#a0a0a0"></div>
<div class="abs" style="left:584.50px;top:193.54px;width:100.00px;height:25.02px;background:#fafafa"></div>
<div class="abs" style="left:584.50px;top:219.26px;width:100.00px;height:2.20px;background:#b4b4b4"></div>
<div class="abs t" style="left:30.200000000000045px;top:198.37px;width:46.200000000000045px;text-align:right;font-size:15.6px;line-height:17.94px;color:#6a6a6a;transform:scaleX(0.875);transform-origin:100% 0">3</div>
<div class="abs t" style="left:85.90px;top:198.62px;font-size:15.6px;line-height:17.94px;color:#141414;transform:scaleX(0.875);transform-origin:0 0">INPUT 3</div>
<div class="abs t" style="left:211.40px;top:198.62px;font-size:15.6px;line-height:17.94px;color:#141414;transform:scaleX(0.875);transform-origin:0 0">3</div>
<div class="abs t" style="left:459.60px;top:198.62px;font-size:15.6px;line-height:17.94px;color:#141414;transform:scaleX(0.875);transform-origin:0 0">-90</div>
<div class="abs t" style="left:585.10px;top:198.62px;font-size:15.6px;line-height:17.94px;color:#141414;transform:scaleX(0.875);transform-origin:0 0">mic</div>
<div class="abs" style="left:6.20px;top:247.88px;width:75.60px;height:1.00px;background:#e4e4e4"></div>
<div class="abs" style="left:81.80px;top:247.88px;width:700.00px;height:1.00px;background:#a0a0a0"></div>
<div class="abs" style="left:584.50px;top:221.06px;width:100.00px;height:25.02px;background:#fafafa"></div>
<div class="abs" style="left:584.50px;top:246.78px;width:100.00px;height:2.20px;background:#b4b4b4"></div>
<div class="abs t" style="left:30.200000000000045px;top:225.89px;width:46.200000000000045px;text-align:right;font-size:15.6px;line-height:17.94px;color:#6a6a6a;transform:scaleX(0.875);transform-origin:100% 0">4</div>
<div class="abs t" style="left:85.90px;top:226.14px;font-size:15.6px;line-height:17.94px;color:#141414;transform:scaleX(0.875);transform-origin:0 0">INPUT 4</div>
<div class="abs t" style="left:211.40px;top:226.14px;font-size:15.6px;line-height:17.94px;color:#141414;transform:scaleX(0.875);transform-origin:0 0">4</div>
<div class="abs t" style="left:459.60px;top:226.14px;font-size:15.6px;line-height:17.94px;color:#141414;transform:scaleX(0.875);transform-origin:0 0">-90</div>
<div class="abs t" style="left:585.10px;top:226.14px;font-size:15.6px;line-height:17.94px;color:#141414;transform:scaleX(0.875);transform-origin:0 0">mic</div>
<div class="abs" style="left:6.20px;top:275.40px;width:75.60px;height:1.00px;background:#e4e4e4"></div>
<div class="abs" style="left:81.80px;top:275.40px;width:700.00px;height:1.00px;background:#a0a0a0"></div>
<div class="abs" style="left:584.50px;top:248.58px;width:100.00px;height:25.02px;background:#fafafa"></div>
<div class="abs" style="left:584.50px;top:274.30px;width:100.00px;height:2.20px;background:#b4b4b4"></div>
<div class="abs t" style="left:30.200000000000045px;top:253.41px;width:46.200000000000045px;text-align:right;font-size:15.6px;line-height:17.94px;color:#6a6a6a;transform:scaleX(0.875);transform-origin:100% 0">5</div>
<div class="abs t" style="left:85.90px;top:253.66px;font-size:15.6px;line-height:17.94px;color:#141414;transform:scaleX(0.875);transform-origin:0 0">INPUT 5</div>
<div class="abs t" style="left:211.40px;top:253.66px;font-size:15.6px;line-height:17.94px;color:#141414;transform:scaleX(0.875);transform-origin:0 0">5</div>
<div class="abs t" style="left:459.60px;top:253.66px;font-size:15.6px;line-height:17.94px;color:#141414;transform:scaleX(0.875);transform-origin:0 0">-90</div>
<div class="abs t" style="left:585.10px;top:253.66px;font-size:15.6px;line-height:17.94px;color:#141414;transform:scaleX(0.875);transform-origin:0 0">mic</div>
<div class="abs" style="left:6.20px;top:302.92px;width:75.60px;height:1.00px;background:#e4e4e4"></div>
<div class="abs" style="left:81.80px;top:302.92px;width:700.00px;height:1.00px;background:#a0a0a0"></div>
<div class="abs" style="left:584.50px;top:276.10px;width:100.00px;height:25.02px;background:#fafafa"></div>
<div class="abs" style="left:584.50px;top:301.82px;width:100.00px;height:2.20px;background:#b4b4b4"></div>
<div class="abs t" style="left:30.200000000000045px;top:280.93px;width:46.200000000000045px;text-align:right;font-size:15.6px;line-height:17.94px;color:#6a6a6a;transform:scaleX(0.875);transform-origin:100% 0">6</div>
<div class="abs t" style="left:85.90px;top:281.18px;font-size:15.6px;line-height:17.94px;color:#141414;transform:scaleX(0.875);transform-origin:0 0">INPUT 6</div>
<div class="abs t" style="left:211.40px;top:281.18px;font-size:15.6px;line-height:17.94px;color:#141414;transform:scaleX(0.875);transform-origin:0 0">6</div>
<div class="abs t" style="left:459.60px;top:281.18px;font-size:15.6px;line-height:17.94px;color:#141414;transform:scaleX(0.875);transform-origin:0 0">-90</div>
<div class="abs t" style="left:585.10px;top:281.18px;font-size:15.6px;line-height:17.94px;color:#141414;transform:scaleX(0.875);transform-origin:0 0">mic</div>
<div class="abs" style="left:6.20px;top:330.44px;width:75.60px;height:1.00px;background:#e4e4e4"></div>
<div class="abs" style="left:81.80px;top:330.44px;width:700.00px;height:1.00px;background:#a0a0a0"></div>
<div class="abs" style="left:584.50px;top:303.62px;width:100.00px;height:25.02px;background:#fafafa"></div>
<div class="abs" style="left:584.50px;top:329.34px;width:100.00px;height:2.20px;background:#b4b4b4"></div>
<div class="abs t" style="left:30.200000000000045px;top:308.45px;width:46.200000000000045px;text-align:right;font-size:15.6px;line-height:17.94px;color:#6a6a6a;transform:scaleX(0.875);transform-origin:100% 0">7</div>
<div class="abs t" style="left:85.90px;top:308.70px;font-size:15.6px;line-height:17.94px;color:#141414;transform:scaleX(0.875);transform-origin:0 0">INPUT 7</div>
<div class="abs t" style="left:211.40px;top:308.70px;font-size:15.6px;line-height:17.94px;color:#141414;transform:scaleX(0.875);transform-origin:0 0">7</div>
<div class="abs t" style="left:459.60px;top:308.70px;font-size:15.6px;line-height:17.94px;color:#141414;transform:scaleX(0.875);transform-origin:0 0">-90</div>
<div class="abs t" style="left:585.10px;top:308.70px;font-size:15.6px;line-height:17.94px;color:#141414;transform:scaleX(0.875);transform-origin:0 0">mic</div>
<div class="abs" style="left:6.20px;top:357.96px;width:75.60px;height:1.00px;background:#e4e4e4"></div>
<div class="abs" style="left:81.80px;top:357.96px;width:700.00px;height:1.00px;background:#a0a0a0"></div>
<div class="abs" style="left:584.50px;top:331.14px;width:100.00px;height:25.02px;background:#fafafa"></div>
<div class="abs" style="left:584.50px;top:356.86px;width:100.00px;height:2.20px;background:#b4b4b4"></div>
<div class="abs t" style="left:30.200000000000045px;top:335.97px;width:46.200000000000045px;text-align:right;font-size:15.6px;line-height:17.94px;color:#6a6a6a;transform:scaleX(0.875);transform-origin:100% 0">8</div>
<div class="abs t" style="left:85.90px;top:336.22px;font-size:15.6px;line-height:17.94px;color:#141414;transform:scaleX(0.875);transform-origin:0 0">INPUT 8</div>
<div class="abs t" style="left:211.40px;top:336.22px;font-size:15.6px;line-height:17.94px;color:#141414;transform:scaleX(0.875);transform-origin:0 0">8</div>
<div class="abs t" style="left:459.60px;top:336.22px;font-size:15.6px;line-height:17.94px;color:#141414;transform:scaleX(0.875);transform-origin:0 0">-90</div>
<div class="abs t" style="left:585.10px;top:336.22px;font-size:15.6px;line-height:17.94px;color:#141414;transform:scaleX(0.875);transform-origin:0 0">mic</div>
<div class="abs" style="left:6.20px;top:385.48px;width:75.60px;height:1.00px;background:#e4e4e4"></div>
<div class="abs" style="left:81.80px;top:385.48px;width:700.00px;height:1.00px;background:#a0a0a0"></div>
<div class="abs" style="left:584.50px;top:358.66px;width:100.00px;height:25.02px;background:#fafafa"></div>
<div class="abs" style="left:584.50px;top:384.38px;width:100.00px;height:2.20px;background:#b4b4b4"></div>
<div class="abs t" style="left:30.200000000000045px;top:363.49px;width:46.200000000000045px;text-align:right;font-size:15.6px;line-height:17.94px;color:#6a6a6a;transform:scaleX(0.875);transform-origin:100% 0">9</div>
<div class="abs t" style="left:85.90px;top:363.74px;font-size:15.6px;line-height:17.94px;color:#141414;transform:scaleX(0.875);transform-origin:0 0">INPUT 9</div>
<div class="abs t" style="left:211.40px;top:363.74px;font-size:15.6px;line-height:17.94px;color:#141414;transform:scaleX(0.875);transform-origin:0 0">9</div>
<div class="abs t" style="left:459.60px;top:363.74px;font-size:15.6px;line-height:17.94px;color:#141414;transform:scaleX(0.875);transform-origin:0 0">-90</div>
<div class="abs t" style="left:585.10px;top:363.74px;font-size:15.6px;line-height:17.94px;color:#141414;transform:scaleX(0.875);transform-origin:0 0">mic</div>
<div class="abs" style="left:6.20px;top:413.00px;width:75.60px;height:1.00px;background:#e4e4e4"></div>
<div class="abs" style="left:81.80px;top:413.00px;width:700.00px;height:1.00px;background:#a0a0a0"></div>
<div class="abs" style="left:584.50px;top:386.18px;width:100.00px;height:25.02px;background:#fafafa"></div>
<div class="abs" style="left:584.50px;top:411.90px;width:100.00px;height:2.20px;background:#b4b4b4"></div>
<div class="abs t" style="left:30.200000000000045px;top:391.01px;width:46.200000000000045px;text-align:right;font-size:15.6px;line-height:17.94px;color:#6a6a6a;transform:scaleX(0.875);transform-origin:100% 0">10</div>
<div class="abs t" style="left:85.90px;top:391.26px;font-size:15.6px;line-height:17.94px;color:#141414;transform:scaleX(0.875);transform-origin:0 0">INPUT 10</div>
<div class="abs t" style="left:211.40px;top:391.26px;font-size:15.6px;line-height:17.94px;color:#141414;transform:scaleX(0.875);transform-origin:0 0">10</div>
<div class="abs t" style="left:459.60px;top:391.26px;font-size:15.6px;line-height:17.94px;color:#141414;transform:scaleX(0.875);transform-origin:0 0">-90</div>
<div class="abs t" style="left:585.10px;top:391.26px;font-size:15.6px;line-height:17.94px;color:#141414;transform:scaleX(0.875);transform-origin:0 0">mic</div>
<div class="abs" style="left:6.20px;top:440.52px;width:75.60px;height:1.00px;background:#e4e4e4"></div>
<div class="abs" style="left:81.80px;top:440.52px;width:700.00px;height:1.00px;background:#a0a0a0"></div>
<div class="abs" style="left:584.50px;top:413.70px;width:100.00px;height:25.02px;background:#fafafa"></div>
<div class="abs" style="left:584.50px;top:439.42px;width:100.00px;height:2.20px;background:#b4b4b4"></div>
<div class="abs t" style="left:30.200000000000045px;top:418.53px;width:46.200000000000045px;text-align:right;font-size:15.6px;line-height:17.94px;color:#6a6a6a;transform:scaleX(0.875);transform-origin:100% 0">11</div>
<div class="abs t" style="left:85.90px;top:418.78px;font-size:15.6px;line-height:17.94px;color:#141414;transform:scaleX(0.875);transform-origin:0 0">INPUT 11</div>
<div class="abs t" style="left:211.40px;top:418.78px;font-size:15.6px;line-height:17.94px;color:#141414;transform:scaleX(0.875);transform-origin:0 0">11</div>
<div class="abs t" style="left:459.60px;top:418.78px;font-size:15.6px;line-height:17.94px;color:#141414;transform:scaleX(0.875);transform-origin:0 0">-90</div>
<div class="abs t" style="left:585.10px;top:418.78px;font-size:15.6px;line-height:17.94px;color:#141414;transform:scaleX(0.875);transform-origin:0 0">mic</div>
<div class="abs" style="left:6.20px;top:468.04px;width:75.60px;height:1.00px;background:#e4e4e4"></div>
<div class="abs" style="left:81.80px;top:468.04px;width:700.00px;height:1.00px;background:#a0a0a0"></div>
<div class="abs" style="left:584.50px;top:441.22px;width:100.00px;height:25.02px;background:#fafafa"></div>
<div class="abs" style="left:584.50px;top:466.94px;width:100.00px;height:2.20px;background:#b4b4b4"></div>
<div class="abs t" style="left:30.200000000000045px;top:446.05px;width:46.200000000000045px;text-align:right;font-size:15.6px;line-height:17.94px;color:#6a6a6a;transform:scaleX(0.875);transform-origin:100% 0">12</div>
<div class="abs t" style="left:85.90px;top:446.30px;font-size:15.6px;line-height:17.94px;color:#141414;transform:scaleX(0.875);transform-origin:0 0">INPUT 12</div>
<div class="abs t" style="left:211.40px;top:446.30px;font-size:15.6px;line-height:17.94px;color:#141414;transform:scaleX(0.875);transform-origin:0 0">12</div>
<div class="abs t" style="left:459.60px;top:446.30px;font-size:15.6px;line-height:17.94px;color:#141414;transform:scaleX(0.875);transform-origin:0 0">-90</div>
<div class="abs t" style="left:585.10px;top:446.30px;font-size:15.6px;line-height:17.94px;color:#141414;transform:scaleX(0.875);transform-origin:0 0">mic</div>
<div class="abs" style="left:6.20px;top:495.56px;width:75.60px;height:1.00px;background:#e4e4e4"></div>
<div class="abs" style="left:81.80px;top:495.56px;width:700.00px;height:1.00px;background:#a0a0a0"></div>
<div class="abs" style="left:584.50px;top:468.74px;width:100.00px;height:25.02px;background:#fafafa"></div>
<div class="abs" style="left:584.50px;top:494.46px;width:100.00px;height:2.20px;background:#b4b4b4"></div>
<div class="abs t" style="left:30.200000000000045px;top:473.57px;width:46.200000000000045px;text-align:right;font-size:15.6px;line-height:17.94px;color:#6a6a6a;transform:scaleX(0.875);transform-origin:100% 0">13</div>
<div class="abs t" style="left:85.90px;top:473.82px;font-size:15.6px;line-height:17.94px;color:#141414;transform:scaleX(0.875);transform-origin:0 0">INPUT 13</div>
<div class="abs t" style="left:211.40px;top:473.82px;font-size:15.6px;line-height:17.94px;color:#141414;transform:scaleX(0.875);transform-origin:0 0">13</div>
<div class="abs t" style="left:459.60px;top:473.82px;font-size:15.6px;line-height:17.94px;color:#141414;transform:scaleX(0.875);transform-origin:0 0">-90</div>
<div class="abs t" style="left:585.10px;top:473.82px;font-size:15.6px;line-height:17.94px;color:#141414;transform:scaleX(0.875);transform-origin:0 0">mic</div>
<div class="abs" style="left:6.20px;top:523.08px;width:75.60px;height:1.00px;background:#e4e4e4"></div>
<div class="abs" style="left:81.80px;top:523.08px;width:700.00px;height:1.00px;background:#a0a0a0"></div>
<div class="abs" style="left:584.50px;top:496.26px;width:100.00px;height:25.02px;background:#fafafa"></div>
<div class="abs" style="left:584.50px;top:521.98px;width:100.00px;height:2.20px;background:#b4b4b4"></div>
<div class="abs t" style="left:30.200000000000045px;top:501.09px;width:46.200000000000045px;text-align:right;font-size:15.6px;line-height:17.94px;color:#6a6a6a;transform:scaleX(0.875);transform-origin:100% 0">14</div>
<div class="abs t" style="left:85.90px;top:501.34px;font-size:15.6px;line-height:17.94px;color:#141414;transform:scaleX(0.875);transform-origin:0 0">INPUT 14</div>
<div class="abs t" style="left:211.40px;top:501.34px;font-size:15.6px;line-height:17.94px;color:#141414;transform:scaleX(0.875);transform-origin:0 0">14</div>
<div class="abs t" style="left:459.60px;top:501.34px;font-size:15.6px;line-height:17.94px;color:#141414;transform:scaleX(0.875);transform-origin:0 0">-90</div>
<div class="abs t" style="left:585.10px;top:501.34px;font-size:15.6px;line-height:17.94px;color:#141414;transform:scaleX(0.875);transform-origin:0 0">mic</div>
<div class="abs" style="left:6.20px;top:550.60px;width:75.60px;height:1.00px;background:#e4e4e4"></div>
<div class="abs" style="left:81.80px;top:550.60px;width:700.00px;height:1.00px;background:#a0a0a0"></div>
<div class="abs" style="left:584.50px;top:523.78px;width:100.00px;height:25.02px;background:#fafafa"></div>
<div class="abs" style="left:584.50px;top:549.50px;width:100.00px;height:2.20px;background:#b4b4b4"></div>
<div class="abs t" style="left:30.200000000000045px;top:528.61px;width:46.200000000000045px;text-align:right;font-size:15.6px;line-height:17.94px;color:#6a6a6a;transform:scaleX(0.875);transform-origin:100% 0">15</div>
<div class="abs t" style="left:85.90px;top:528.86px;font-size:15.6px;line-height:17.94px;color:#141414;transform:scaleX(0.875);transform-origin:0 0">INPUT 15</div>
<div class="abs t" style="left:211.40px;top:528.86px;font-size:15.6px;line-height:17.94px;color:#141414;transform:scaleX(0.875);transform-origin:0 0">15</div>
<div class="abs t" style="left:459.60px;top:528.86px;font-size:15.6px;line-height:17.94px;color:#141414;transform:scaleX(0.875);transform-origin:0 0">-90</div>
<div class="abs t" style="left:585.10px;top:528.86px;font-size:15.6px;line-height:17.94px;color:#141414;transform:scaleX(0.875);transform-origin:0 0">mic</div>
<div class="abs" style="left:6.20px;top:578.12px;width:75.60px;height:1.00px;background:#e4e4e4"></div>
<div class="abs" style="left:81.80px;top:578.12px;width:700.00px;height:1.00px;background:#a0a0a0"></div>
<div class="abs" style="left:584.50px;top:551.30px;width:100.00px;height:25.02px;background:#fafafa"></div>
<div class="abs" style="left:584.50px;top:577.02px;width:100.00px;height:2.20px;background:#b4b4b4"></div>
<div class="abs t" style="left:30.200000000000045px;top:556.13px;width:46.200000000000045px;text-align:right;font-size:15.6px;line-height:17.94px;color:#6a6a6a;transform:scaleX(0.875);transform-origin:100% 0">16</div>
<div class="abs t" style="left:85.90px;top:556.38px;font-size:15.6px;line-height:17.94px;color:#141414;transform:scaleX(0.875);transform-origin:0 0">INPUT 16</div>
<div class="abs t" style="left:211.40px;top:556.38px;font-size:15.6px;line-height:17.94px;color:#141414;transform:scaleX(0.875);transform-origin:0 0">16</div>
<div class="abs t" style="left:459.60px;top:556.38px;font-size:15.6px;line-height:17.94px;color:#141414;transform:scaleX(0.875);transform-origin:0 0">-90</div>
<div class="abs t" style="left:585.10px;top:556.38px;font-size:15.6px;line-height:17.94px;color:#141414;transform:scaleX(0.875);transform-origin:0 0">mic</div>
<div class="abs" style="left:6.20px;top:605.64px;width:75.60px;height:1.00px;background:#e4e4e4"></div>
<div class="abs" style="left:81.80px;top:605.64px;width:700.00px;height:1.00px;background:#a0a0a0"></div>
<div class="abs" style="left:584.50px;top:578.82px;width:100.00px;height:25.02px;background:#fafafa"></div>
<div class="abs" style="left:584.50px;top:604.54px;width:100.00px;height:2.20px;background:#b4b4b4"></div>
<div class="abs t" style="left:30.200000000000045px;top:583.65px;width:46.200000000000045px;text-align:right;font-size:15.6px;line-height:17.94px;color:#6a6a6a;transform:scaleX(0.875);transform-origin:100% 0">17</div>
<div class="abs t" style="left:85.90px;top:583.90px;font-size:15.6px;line-height:17.94px;color:#141414;transform:scaleX(0.875);transform-origin:0 0">TALKBACK</div>
<div class="abs t" style="left:211.40px;top:583.90px;font-size:15.6px;line-height:17.94px;color:#141414;transform:scaleX(0.875);transform-origin:0 0">17</div>
<div class="abs t" style="left:459.60px;top:583.90px;font-size:15.6px;line-height:17.94px;color:#141414;transform:scaleX(0.875);transform-origin:0 0">-90</div>
<div class="abs t" style="left:585.10px;top:583.90px;font-size:15.6px;line-height:17.94px;color:#141414;transform:scaleX(0.875);transform-origin:0 0">mic</div>
<div class="abs" style="left:6.20px;top:633.16px;width:75.60px;height:1.00px;background:#e4e4e4"></div>
<div class="abs" style="left:81.80px;top:633.16px;width:700.00px;height:1.00px;background:#a0a0a0"></div>
<div class="abs" style="left:584.50px;top:606.34px;width:100.00px;height:25.02px;background:#fafafa"></div>
<div class="abs" style="left:584.50px;top:632.06px;width:100.00px;height:2.20px;background:#b4b4b4"></div>
<div class="abs t" style="left:30.200000000000045px;top:611.17px;width:46.200000000000045px;text-align:right;font-size:15.6px;line-height:17.94px;color:#6a6a6a;transform:scaleX(0.875);transform-origin:100% 0">18</div>
<div class="abs t" style="left:85.90px;top:611.42px;font-size:15.6px;line-height:17.94px;color:#141414;transform:scaleX(0.875);transform-origin:0 0">DDR 1</div>
<div class="abs t" style="left:211.40px;top:611.42px;font-size:15.6px;line-height:17.94px;color:#141414;transform:scaleX(0.875);transform-origin:0 0">18</div>
<div class="abs t" style="left:459.60px;top:611.42px;font-size:15.6px;line-height:17.94px;color:#141414;transform:scaleX(0.875);transform-origin:0 0">-90</div>
<div class="abs t" style="left:585.10px;top:611.42px;font-size:15.6px;line-height:17.94px;color:#141414;transform:scaleX(0.875);transform-origin:0 0">mic</div>
<div class="abs" style="left:6.20px;top:660.68px;width:75.60px;height:1.00px;background:#e4e4e4"></div>
<div class="abs" style="left:81.80px;top:660.68px;width:700.00px;height:1.00px;background:#a0a0a0"></div>
<div class="abs" style="left:584.50px;top:633.86px;width:100.00px;height:25.02px;background:#fafafa"></div>
<div class="abs" style="left:584.50px;top:659.58px;width:100.00px;height:2.20px;background:#b4b4b4"></div>
<div class="abs t" style="left:30.200000000000045px;top:638.69px;width:46.200000000000045px;text-align:right;font-size:15.6px;line-height:17.94px;color:#6a6a6a;transform:scaleX(0.875);transform-origin:100% 0">19</div>
<div class="abs t" style="left:85.90px;top:638.94px;font-size:15.6px;line-height:17.94px;color:#141414;transform:scaleX(0.875);transform-origin:0 0">DDR 2</div>
<div class="abs t" style="left:211.40px;top:638.94px;font-size:15.6px;line-height:17.94px;color:#141414;transform:scaleX(0.875);transform-origin:0 0">19</div>
<div class="abs t" style="left:459.60px;top:638.94px;font-size:15.6px;line-height:17.94px;color:#141414;transform:scaleX(0.875);transform-origin:0 0">-90</div>
<div class="abs t" style="left:585.10px;top:638.94px;font-size:15.6px;line-height:17.94px;color:#141414;transform:scaleX(0.875);transform-origin:0 0">mic</div>
<div class="abs" style="left:6.20px;top:688.20px;width:75.60px;height:1.00px;background:#e4e4e4"></div>
<div class="abs" style="left:81.80px;top:688.20px;width:700.00px;height:1.00px;background:#a0a0a0"></div>
<div class="abs" style="left:584.50px;top:661.38px;width:100.00px;height:25.02px;background:#fafafa"></div>
<div class="abs" style="left:584.50px;top:687.10px;width:100.00px;height:2.20px;background:#b4b4b4"></div>
<div class="abs t" style="left:30.200000000000045px;top:666.21px;width:46.200000000000045px;text-align:right;font-size:15.6px;line-height:17.94px;color:#6a6a6a;transform:scaleX(0.875);transform-origin:100% 0">20</div>
<div class="abs t" style="left:85.90px;top:666.46px;font-size:15.6px;line-height:17.94px;color:#141414;transform:scaleX(0.875);transform-origin:0 0">DDR 3</div>
<div class="abs t" style="left:211.40px;top:666.46px;font-size:15.6px;line-height:17.94px;color:#141414;transform:scaleX(0.875);transform-origin:0 0">20</div>
<div class="abs t" style="left:459.60px;top:666.46px;font-size:15.6px;line-height:17.94px;color:#141414;transform:scaleX(0.875);transform-origin:0 0">-90</div>
<div class="abs t" style="left:585.10px;top:666.46px;font-size:15.6px;line-height:17.94px;color:#141414;transform:scaleX(0.875);transform-origin:0 0">mic</div>
<div class="abs" style="left:6.20px;top:715.72px;width:75.60px;height:1.00px;background:#e4e4e4"></div>
<div class="abs" style="left:81.80px;top:715.72px;width:700.00px;height:1.00px;background:#a0a0a0"></div>
<div class="abs" style="left:584.50px;top:688.90px;width:100.00px;height:25.02px;background:#fafafa"></div>
<div class="abs" style="left:584.50px;top:714.62px;width:100.00px;height:2.20px;background:#b4b4b4"></div>
<div class="abs t" style="left:30.200000000000045px;top:693.73px;width:46.200000000000045px;text-align:right;font-size:15.6px;line-height:17.94px;color:#6a6a6a;transform:scaleX(0.875);transform-origin:100% 0">21</div>
<div class="abs t" style="left:85.90px;top:693.98px;font-size:15.6px;line-height:17.94px;color:#141414;transform:scaleX(0.875);transform-origin:0 0">DDR 4</div>
<div class="abs t" style="left:211.40px;top:693.98px;font-size:15.6px;line-height:17.94px;color:#141414;transform:scaleX(0.875);transform-origin:0 0">21</div>
<div class="abs t" style="left:459.60px;top:693.98px;font-size:15.6px;line-height:17.94px;color:#141414;transform:scaleX(0.875);transform-origin:0 0">-90</div>
<div class="abs t" style="left:585.10px;top:693.98px;font-size:15.6px;line-height:17.94px;color:#141414;transform:scaleX(0.875);transform-origin:0 0">mic</div>
<div class="abs" style="left:6.20px;top:743.24px;width:75.60px;height:1.00px;background:#e4e4e4"></div>
<div class="abs" style="left:81.80px;top:743.24px;width:700.00px;height:1.00px;background:#a0a0a0"></div>
<div class="abs" style="left:584.50px;top:716.42px;width:100.00px;height:25.02px;background:#fafafa"></div>
<div class="abs" style="left:584.50px;top:742.14px;width:100.00px;height:2.20px;background:#b4b4b4"></div>
<div class="abs t" style="left:30.200000000000045px;top:721.25px;width:46.200000000000045px;text-align:right;font-size:15.6px;line-height:17.94px;color:#6a6a6a;transform:scaleX(0.875);transform-origin:100% 0">22</div>
<div class="abs t" style="left:85.90px;top:721.50px;font-size:15.6px;line-height:17.94px;color:#141414;transform:scaleX(0.875);transform-origin:0 0">SOUND</div>
<div class="abs t" style="left:211.40px;top:721.50px;font-size:15.6px;line-height:17.94px;color:#141414;transform:scaleX(0.875);transform-origin:0 0">22</div>
<div class="abs t" style="left:459.60px;top:721.50px;font-size:15.6px;line-height:17.94px;color:#141414;transform:scaleX(0.875);transform-origin:0 0">-90</div>
<div class="abs t" style="left:585.10px;top:721.50px;font-size:15.6px;line-height:17.94px;color:#141414;transform:scaleX(0.875);transform-origin:0 0">mic</div>
<div class="abs" style="left:6.20px;top:770.76px;width:75.60px;height:1.00px;background:#e4e4e4"></div>
<div class="abs" style="left:81.80px;top:770.76px;width:700.00px;height:1.00px;background:#a0a0a0"></div>
<div class="abs" style="left:584.50px;top:743.94px;width:100.00px;height:25.02px;background:#fafafa"></div>
<div class="abs" style="left:584.50px;top:769.66px;width:100.00px;height:2.20px;background:#b4b4b4"></div>
<div class="abs t" style="left:30.200000000000045px;top:748.77px;width:46.200000000000045px;text-align:right;font-size:15.6px;line-height:17.94px;color:#6a6a6a;transform:scaleX(0.875);transform-origin:100% 0">23</div>
<div class="abs t" style="left:85.90px;top:749.02px;font-size:15.6px;line-height:17.94px;color:#141414;transform:scaleX(0.875);transform-origin:0 0">EFFECTS</div>
<div class="abs t" style="left:211.40px;top:749.02px;font-size:15.6px;line-height:17.94px;color:#141414;transform:scaleX(0.875);transform-origin:0 0">23</div>
<div class="abs t" style="left:459.60px;top:749.02px;font-size:15.6px;line-height:17.94px;color:#141414;transform:scaleX(0.875);transform-origin:0 0">-90</div>
<div class="abs t" style="left:585.10px;top:749.02px;font-size:15.6px;line-height:17.94px;color:#141414;transform:scaleX(0.875);transform-origin:0 0">mic</div>
<div class="abs" style="left:6.20px;top:798.28px;width:75.60px;height:1.00px;background:#e4e4e4"></div>
<div class="abs" style="left:81.80px;top:798.28px;width:700.00px;height:1.00px;background:#a0a0a0"></div>
<div class="abs t" style="left:30.200000000000045px;top:776.29px;width:46.200000000000045px;text-align:right;font-size:15.6px;line-height:17.94px;color:#6a6a6a;transform:scaleX(0.875);transform-origin:100% 0">24</div>
<div class="abs" style="left:81.80px;top:137.50px;width:1.00px;height:660.48px;background:#a0a0a0"></div>
<div class="abs" style="left:207.60px;top:137.50px;width:1.00px;height:660.48px;background:#a0a0a0"></div>
<div class="abs" style="left:332.20px;top:137.50px;width:1.00px;height:660.48px;background:#a0a0a0"></div>
<div class="abs" style="left:457.60px;top:137.50px;width:1.00px;height:660.48px;background:#a0a0a0"></div>
<div class="abs" style="left:582.50px;top:137.50px;width:1.00px;height:660.48px;background:#a0a0a0"></div>
<svg class="abs" style="left:13.900000000000091px;top:147.1px" width="8" height="13"><path d="M0 0L7.5 6.1L0 12.2Z" fill="#2d2d2d"/></svg>
<svg class="abs" style="left:16.40000000000009px;top:782.4px" width="8" height="8" viewBox="-4 -4 8 8"><path d="M0,-3.4 L1,-1.4 3.2,-1.1 1.6,0.5 2,2.8 0,1.7 -2,2.8 -1.6,0.5 -3.2,-1.1 -1,-1.4Z" fill="#4a4a4a" stroke="#4a4a4a" stroke-width="0.8" stroke-linejoin="round"/></svg>
</div>
<svg class="abs" style="left:0;top:0" width="1351" height="907">
<g fill="none" stroke="#fe5200" stroke-width="3.7">
<rect x="96.85" y="468.85" width="226.9" height="93.3"/>
<rect x="776.85" y="684.85" width="216.3" height="112.3"/>
<path d="M913.6 692.5L211 489"/>
</g>
<path d="M194.6 484.5L214.9 480.8L209.5 497.8Z" fill="#fe5200"/>
</svg>
</body></html>
